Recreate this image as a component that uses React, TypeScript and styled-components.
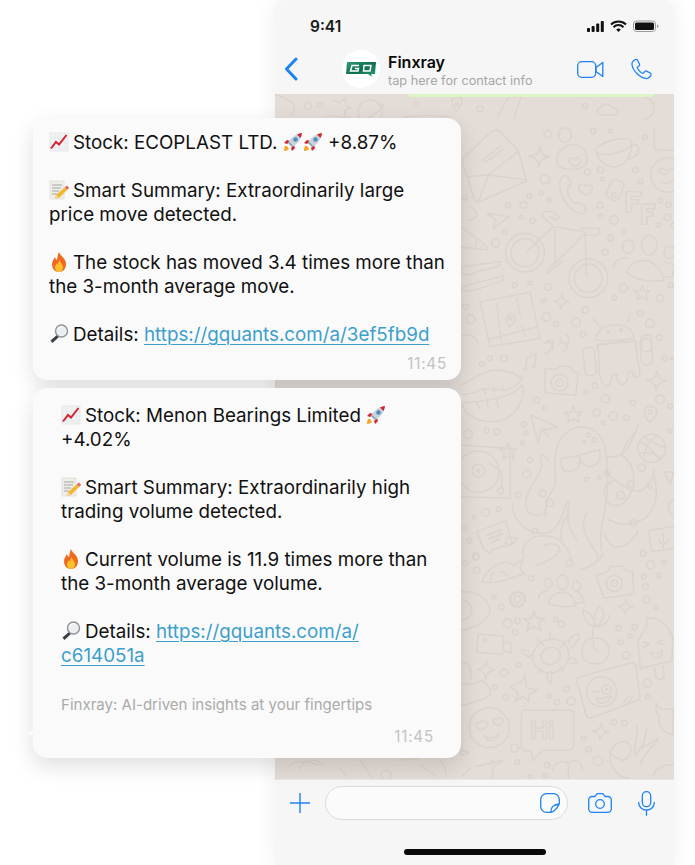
import React from "react";
import styled, { createGlobalStyle } from "styled-components";

const Global = createGlobalStyle`
  html, body { margin: 0; padding: 0; background: #fff; }
  body { font-family: Inter, "Liberation Sans", sans-serif; }
`;

const Page = styled.div`
  position: relative;
  width: 695px;
  height: 865px;
  overflow: hidden;
  background: #fff;
`;
const Phone = styled.div`
  margin-left: 275px;
  width: 399px;
  height: 865px;
  display: flex;
  flex-direction: column;
  background: #f6f6f6;
  border-radius: 10px 10px 0 0;
  box-shadow: 0 0 22px rgba(0, 0, 0, 0.07);
`;
const StatusBar = styled.div`
  height: 44px;
  display: flex;
  align-items: center;
  justify-content: space-between;
  padding: 8px 14px 0 35px;
  box-sizing: border-box;
`;
const Clock = styled.span`
  font-size: 15.5px;
  font-weight: 600;
  color: #1a1a1a;
`;
const ChatHeader = styled.div`
  height: 50px;
  display: flex;
  align-items: center;
  padding: 0 21px 0 9px;
  box-sizing: border-box;
`;
const Avatar = styled.div`
  width: 38px;
  height: 38px;
  border-radius: 50%;
  background: #fff;
  margin-left: 44px;
  display: flex;
  align-items: center;
  justify-content: center;
  flex: none;
`;
const Contact = styled.div`
  margin-left: 8px;
  flex: 1;
  display: flex;
  flex-direction: column;
  margin-top: 3px;
`;
const Name = styled.span`
  font-size: 16px;
  line-height: 20px;
  font-weight: 600;
  color: #0a0a0a;
`;
const Sub = styled.span`
  font-size: 12.7px;
  line-height: 17px;
  color: #a6a6a6;
`;
const HeaderActions = styled.div`
  display: flex;
  align-items: center;
  gap: 26px;
`;
const Wallpaper = styled.div`
  flex: 1;
  position: relative;
  background: #e4dcd6;
  overflow: hidden;
`;
const Doodles = styled.svg`
  display: block;
  width: 399px;
  height: 685px;
`;
const GreenStrip = styled.div`
  position: absolute;
  top: 0;
  left: 133px;
  width: 246px;
  height: 3px;
  background: #dcf5c4;
  border-radius: 0 0 6px 6px;
`;
const Composer = styled.div`
  height: 86px;
  display: flex;
  flex-direction: column;
  background: #f6f6f6;
  border-top: 1px solid #ebe7e3;
  box-sizing: border-box;
`;
const ComposerRow = styled.div`
  display: flex;
  align-items: center;
  height: 46px;
  margin-top: 0;
  padding: 0 18px 0 15px;
`;
const InputField = styled.div`
  margin-left: 15px;
  width: 243px;
  height: 34px;
  box-sizing: border-box;
  background: #fbfbfb;
  border: 1px solid #dcdcdc;
  border-radius: 17px;
  display: flex;
  align-items: center;
  justify-content: flex-end;
  padding-right: 7px;
`;
const RightIcons = styled.div`
  margin-left: 20px;
  display: flex;
  align-items: center;
  gap: 26px;
`;
const HomeBar = styled.div`
  width: 142px;
  height: 6px;
  border-radius: 3px;
  background: #0a0a0a;
  margin: 23px auto 0;
`;
const Stack = styled.div`
  position: absolute;
  left: 33px;
  top: 118px;
  width: 428px;
  display: flex;
  flex-direction: column;
  gap: 8px;
`;
const Bubble = styled.div<{ $inset: number; $top: number; $tail?: boolean }>`
  position: relative;
  box-sizing: border-box;
  background: #fafafa;
  border-radius: 14px;
  box-shadow: 0 8px 22px rgba(0, 0, 0, 0.13);
  padding: ${(p) => p.$top}px 14px 0 ${(p) => p.$inset}px;
  color: #111;
  font-size: 18.8px;
  line-height: 24px;
  ${(p) =>
    p.$tail
      ? `&::before {
    content: "";
    position: absolute;
    left: -7px;
    bottom: 22px;
    border-style: solid;
    border-width: 3px 8px 3px 0;
    border-color: transparent #fafafa transparent transparent;
  }`
      : ""}
`;
const Para = styled.div<{ $right?: number }>`
  margin-bottom: 24px;
  padding-right: ${(p) => p.$right ?? 0}px;
`;
const LastPara = styled.div`
  margin: 0;
`;
const Link = styled.a`
  color: #3c9fcc;
  text-decoration: underline;
  text-underline-offset: 3px;
  text-decoration-thickness: 1px;
`;
const Tagline = styled.div`
  margin-top: 25px;
  font-size: 15.05px;
  line-height: 24px;
  color: #aaaaaa;
`;
const Time = styled.div<{ $top: number; $bottom: number; $right?: number }>`
  text-align: right;
  font-size: 15.2px;
  line-height: 20px;
  letter-spacing: 0.8px;
  color: #c2c2c2;
  margin-top: ${(p) => p.$top}px;
  padding-bottom: ${(p) => p.$bottom}px;
  padding-right: ${(p) => p.$right ?? 0}px;
`;
const EmojiIcon = styled.svg`
  display: inline-block;
  width: 20px;
  height: 20px;
  vertical-align: -3px;
  margin-right: 4px;
`;

const Chart = () => (
  <EmojiIcon viewBox="0 0 20 20">
    <rect x="1" y="1" width="18" height="18" fill="#f2f2f4" stroke="#dcdde0" strokeWidth=".6" />
    <path d="M1 6h18M1 11h18M1 16h18M6 1v18M11 1v18M16 1v18" stroke="#dfe1e5" strokeWidth=".5" />
    <path d="M2 16.5 7 10l3 2.5L17.5 3" fill="none" stroke="#d32433" strokeWidth="2" />
  </EmojiIcon>
);
const Memo = () => (
  <EmojiIcon viewBox="0 0 20 20">
    <rect x="1" y="1" width="14" height="18" fill="#efefe9" stroke="#d8d8d0" strokeWidth=".6" />
    <path d="M3 5h10M3 8h9M3 11h7M3 14h5" stroke="#9b9b9b" strokeWidth=".9" />
    <path d="M18 5.5 20 8 10 18l-4 1 1-4z" fill="#f2b632" />
    <path d="M18 5.5 20 8l-1.6 1.6-2.6-2z" fill="#e0667a" />
    <path d="M7 15l-1 4 4-1z" fill="#f3d9ae" />
  </EmojiIcon>
);
const Rocket = () => (
  <EmojiIcon viewBox="0 0 20 20" style={{ marginRight: 0 }}>
    <path d="M2 14c-1 2-1 4-1 5 2 0 4-1 5-2l-2-3z" fill="#f7a823" />
    <path d="M1 11l3-3 3 1-3 3zM9 19l3-3-1-3-3 3z" fill="#d5222f" />
    <path d="M5 11C8 5 13 2 19 1c-1 6-4 11-10 14z" fill="#c7d2dc" />
    <path d="M14 2.500c2-1 3-1.200 5-1.500-.3 2-.6 3-1.500 5z" fill="#d5222f" />
    <circle cx="12.500" cy="7.500" r="2" fill="#3e8fd0" stroke="#7f96a8" strokeWidth=".7" />
    <path d="M5 11l4 4 1.500-.8L5.800 9.500z" fill="#8fa3b3" />
  </EmojiIcon>
);
const Fire = () => (
  <EmojiIcon viewBox="1.500 0 17 20">
    <path d="M10 0c1 4 7 6 7 12 0 5-3 8-7 8s-7-3-7-8c0-3 2-5 3-7 .3 1.500 1 2.500 2 3C8.500 6 8.500 3 10 0z" fill="#ef6a1f" />
    <path d="M10.500 8c.5 2.500 3.500 4 3.500 7.500 0 2.500-2 4.500-4 4.500s-4-2-4-4.500c0-2 1.300-3 2-4.500.3.800.7 1.300 1.200 1.500 0-1.500 0-3 1.300-4.500z" fill="#fbc02d" />
  </EmojiIcon>
);
const Magnifier = () => (
  <EmojiIcon viewBox="0 0 20 20">
    <path d="M8.500 10.500 1.500 16.500l2 2.500 7-6.500z" fill="#3b3f44" />
    <circle cx="12.500" cy="7" r="6" fill="#eceff2" stroke="#8d949b" strokeWidth="1.400" />
    <path d="M9 5c1-2 3-2.800 5-2.300" fill="none" stroke="#fff" strokeWidth="1.200" />
  </EmojiIcon>
);

const BLUE = "#1c83f5";
const LineIcon = styled.svg`
  display: block;
  flex: none;
  fill: none;
  stroke: ${BLUE};
  stroke-linecap: round;
  stroke-linejoin: round;
`;

const Dots = ({ pts }: { pts: number[][] }) => (
  <>
    {pts.map(([x, y, r], i) => (
      <circle key={i} cx={x} cy={y} r={r} />
    ))}
  </>
);
const Star = ({ x, y, s = 1 }: { x: number; y: number; s?: number }) => (
  <path
    transform={`translate(${x} ${y}) scale(${s})`}
    d="M0-26 7-8 26-9 12 4 18 22 0 12-17 22-12 4-26-8-7-8Z"
  />
);
const Sparkle = ({ x, y, s = 1 }: { x: number; y: number; s?: number }) => (
  <path
    transform={`translate(${x} ${y}) scale(${s})`}
    d="M2-30C4-8 10-3 30 0 8 4 3 10-2 30-5 8-10 4-30-2-8-5-2-10 2-30Z"
  />
);

const Wall = () => (
  <Doodles viewBox="275 94 399 685" fill="none" stroke="#dbd3cc" strokeLinecap="round" strokeLinejoin="round">
    <g strokeWidth="1.5">
      <circle cx="308" cy="106" r="3.500" />
      <circle cx="320" cy="105" r="2.500" />
      <path d="M333 100l6 3 6-5 1 7 5 3-6 2-1 6" />
      <circle cx="370" cy="112" r="12" />
      <path d="M357 118c-6 3-5 5 0 4 8-2 18-7 25-14 3-4 0-5-4-3" />
      <path d="M275 95c8 0 12 6 18 8 3 4 1 10-3 12" />
      <path d="M322 122c4-7 14-8 20-4 6-3 12 2 14 6" />
      <circle cx="416" cy="104" r="2.500" />
      <path d="M452 100c2-4 8-4 10 0 1 4-3 8-5 11-3-3-6-7-5-11Z" />
      <circle cx="457" cy="104" r="1.500" />
      <path d="M403 118c10-3 40-3 48 0" />
      <circle cx="480" cy="109" r="3" />
      <path d="M510 94l-12 22M522 94l-8 24" />
      <circle cx="585" cy="106" r="2.500" />
      <path d="M600 108c2-5 10-5 12 0 5-1 8 4 5 7h-18c-3-3-2-7 1-7Z" />
      <path d="M640 96c8 0 14 5 14 12s-6 10-10 12" />
      <path d="M300 770c0-5 4-9 9-9 5-2 12 0 14 4M340 768l6 8M360 760l12 18M386 770a5 5 0 1 0 .1 0M420 765l18 12M470 768l-8 8" />
      <path d="M290 765c8-5 20-4 28 0M400 760l20-2M440 760c4 4 6 10 6 16" />
    </g>
    <g transform="translate(460 130) scale(.3333)" strokeWidth="4.500">
      <path d="M10 85 90 8c14-10 26-8 35 0l50 55 25 90-140 62c-8 3-14 0-17-8L8 100c-1-6 0-11 2-15Z" />
      <path d="M25 140 85 135 175 65M85 135 200 150M85 135 55 215M65 92l58-45M74 98l56-40" />
      <Sparkle x={238} y={80} />
      <path d="M290 90c0-30 30-50 55-45 25 3 40 25 35 50-5 20-30 25-50 22-20 2-40-5-40-27Z" />
      <path d="M345 110c-15-6-22-15-18-22 5-6 12-4 15 1 3-7 14-8 18-1 3 8-5 17-15 22Z" />
      <ellipse cx="315" cy="15" rx="19" ry="22" />
      <ellipse cx="462" cy="50" rx="55" ry="20" transform="rotate(-14 462 50)" />
      <path d="M408 58c3 30 30 58 62 52 30-6 45-40 46-72M515 45c28-8 32 30-8 42" />
      <circle cx="624" cy="135" r="52" />
      <path d="M600 128c-8-8 4-18 12-8 8-6 16 4 6 14ZM630 125c-2-10 10-14 14-6M605 155c12 8 26 6 36-4" />
      <path d="M582 0v50c0 8 8 10 14 10h44" />
      <path d="M303 145c-14 35 15 95 58 105 14 3 22-10 14-20l-12-10c-8-6-16 2-22-2-12-8-20-30-18-42 2-6 10-8 10-18l-8-16c-6-8-18-5-22 3Z" />
      <path d="M378 195c-16-8-26-20-20-28 6-8 16-4 20 2 6-6 18-6 20 4 2 8-8 16-20 22Z" />
      <rect x="445" y="150" width="40" height="60" rx="12" transform="rotate(25 465 180)" />
      <path d="M498 185h45v14h-28v10h20v13h-20v24h-17ZM545 222h40v14h-24v10h18v13h-18v24h-16Z" />
      <circle cx="462" cy="195" r="7" />
      <circle cx="195" cy="368" r="58" />
      <circle cx="195" cy="368" r="42" />
      <circle cx="385" cy="445" r="58" />
      <circle cx="385" cy="445" r="42" />
      <path d="M200 365 280 290 375 305 380 440M285 300 285 400 375 310M280 290 245 255c8-18 40-15 52 8l-8 8-20-12M362 295h52c8 0 8 20-4 20h-35M260 430l46-36M265 415l20-15" />
      <path d="M80 250 148 260 100 297 108 270Z" />
      <path d="M0 290 78 345 82 360 0 350M50 325 45 358M70 340 60 358" />
      <path d="M30 232c10 0 20 10 20 25-6 8-18 14-26 14" />
      <path d="M5 410 118 395c6 6 0 14-8 16l-60 14c-14 12-30 10-45 6ZM5 470 130 437c6 8-3 16-12 18l-52 18c-14 10-40 8-61 10Z" />
      <path d="M60 515 210 487 240 625 90 650Z" />
      <path d="M80 630 235 590" />
      <path d="M110 520l15 120M170 505l12 60M185 590l10 25" strokeDasharray="12 8" />
      <path d="M150 590c-14-12-18-28-6-36 10-6 24 2 22 14-2 8-10 16-16 22Z" />
      <circle cx="150" cy="565" r="5" />
      <Sparkle x={305} y={515} s={.8} />
      <Star x={547} y={490} s={.9} />
      <ellipse cx="505" cy="350" rx="17" ry="20" />
      <ellipse cx="568" cy="345" rx="23" ry="29" />
      <ellipse cx="628" cy="367" rx="16" ry="19" />
      <path d="M500 428c10-45 90-60 112 22-40 8-80 2-112-22ZM460 415c6-26 22-34 42-30M610 395l35 10-8 35-22 0" />
      <path d="M400 565l22 28M512 550l-10 28M408 630c0-55 110-65 114-5-40 8-80 8-114 5Z" />
      <path d="M410 660v-14l118-14v28" />
      <circle cx="445" cy="605" r="4" />
      <circle cx="482" cy="600" r="4" />
      <rect x="545" y="615" width="30" height="50" rx="12" />
      <path d="M260 640c0-10 14-14 20-4l-2 22M320 615c10 6 8 24-4 32M300 620c6 6 4 18-4 24" />
      <path d="M3 620c20-12 46-2 50 20" />
      <Dots
        pts={[
          [263, 12, 11], [400, 3, 8], [452, 4, 6], [555, 22, 7], [382, 126, 9], [422, 120, 9], [526, 120, 8], [428, 148, 6],
          [541, 154, 7], [255, 148, 14], [208, 198, 7], [243, 190, 6], [267, 211, 6], [14, 202, 7], [144, 226, 8], [190, 225, 10],
          [420, 226, 9], [421, 258, 7], [462, 270, 13], [602, 211, 7], [625, 224, 8], [622, 262, 10], [595, 285, 7], [639, 285, 6],
          [184, 262, 6], [218, 273, 8], [134, 306, 7], [107, 340, 12], [452, 324, 9], [492, 306, 5], [436, 367, 9], [164, 466, 7],
          [210, 460, 6], [263, 471, 10], [250, 512, 6], [376, 540, 10], [490, 474, 12], [463, 504, 7], [600, 505, 11], [632, 466, 7],
          [16, 530, 8], [32, 568, 13], [259, 561, 13], [288, 582, 8], [348, 576, 13], [369, 612, 8], [541, 550, 9], [570, 580, 13], [598, 623, 9],
        ]}
      />
    </g>
    <g transform="translate(460 340) scale(.3333)" strokeWidth="4.500">
      <path d="M3 135c35-15 65-45 108-45 30 2 55 8 75 25-8 14-20 26-42 32-30 6-60-6-85 4-18 7-35 12-53 12" />
      <path d="M5 190c50-6 140-8 183-55 10 55-35 110-90 110-45 0-85-20-93-55Z" />
      <path d="M70 145l8 18M100 140l3 15M125 135l8 18M50 185l8 20M80 180l5 22M110 178l5 22" />
      <path d="M198 85l3-30 28-14-4 34M198 85c-10-4-10 8 0 6M225 75c-10-4-10 8 0 6" />
      <path d="M255 85 290 88l8-10 35 2 8 15 14 3-8 68-92-8Z" />
      <circle cx="299" cy="128" r="25" />
      <circle cx="299" cy="128" r="11" />
      <path d="M415 12 525 2l15 100c0 12-18 12-22 0l-2-10-10 3c0 50-38 50-35 8l-15 2c0 44-33 44-34 2l-4-2Z" />
      <rect x="372" y="22" width="34" height="85" rx="14" transform="rotate(-6 389 65)" />
      <rect x="542" y="-5" width="34" height="80" rx="14" transform="rotate(-6 559 35)" />
      <path d="M255 10c10-10 25-4 20 14-4 10-12 16-20 16M305 8c10 0 20 4 15 18-2 4-6 6-10 6" />
      <Sparkle x={590} y={122} />
      <path d="M570 248c-14-14-22-30-14-42 10-12 32-8 34 8 0 12-10 24-20 34Z" />
      <circle cx="570" cy="216" r="6" />
      <Star x={340} y={225} />
      <path d="M212 225 295 262 243 270 235 310Z" />
      <path d="M245 268 265 290" />
      <path d="M285 378c-5-70 30-118 85-118 60 5 72 65 72 135 2 38 2 90-15 150-5 25-5 50-3 85" />
      <path d="M285 378c2 40 5 60-15 85-14 20-14 50-15 68M265 360c-25-30-26-18-20 15 2 30-45 65-48 115 0 30 25 45 50 30" />
      <path d="M157 490c0 50 40 90 90 90 30 0 50-20 66-70 8-28 15-40 12-10-6 40 0 70 25 100M440 350c30 2 60 8 95-95-5 30-42 50-52 90 30 15 42 50 38 90-8 30-25 62-58 62-14 0-30-15-30-40 0-22 18-40 38-32" />
      <path d="M435 395c40 35 100 90 130 35 10-10 18-30 15-40 12 60 18 100-20 140-35 26-75 30-115 8" />
      <path d="M190 650c-10-50 35-70 85-60 30 10 50 30 60 70M330 520c-25 20-30 50-25 85M380 520c-15 25-10 55 5 80 15 20 30 50 30 60M435 575c0 25 20 50 45 45 18 0 48-30 55-50" />
      <path d="M250 620c20-15 50-10 50 15" />
      <path d="M304 355l54-8c5 20 2 38-18 46l-24 3c-14-12-14-28-12-41ZM358 345l60-16c5 20 3 36-10 46l-22 6c-16-5-26-18-28-36ZM350 370l10-5" />
      <path d="M370 420c4-8 14-10 18-6-2 10-10 14-18 6Z" />
      <circle cx="385" cy="285" r="6" />
      <circle cx="402" cy="300" r="7" />
      <circle cx="372" cy="305" r="4" />
      <circle cx="440" cy="400" r="8" />
      <circle cx="420" cy="412" r="5" />
      <circle cx="450" cy="430" r="3" />
      <circle cx="175" cy="465" r="8" />
      <circle cx="248" cy="460" r="10" />
      <circle cx="268" cy="488" r="12" />
      <circle cx="225" cy="572" r="8" />
      <circle cx="512" cy="432" r="10" />
      <circle cx="482" cy="466" r="12" />
      <circle cx="520" cy="548" r="9" />
      <circle cx="570" cy="440" r="5" />
      <circle cx="575" cy="325" r="42" />
      <path d="M540 305c25 10 50 40 58 55M590 290c-30 15-40 45-35 72M555 290c20 20 50 30 60 30M537 340c25-5 50 0 70 15" />
      <path d="M0 315 150 325 150 475 0 470" />
      <circle cx="55" cy="395" r="62" />
      <circle cx="55" cy="392" r="19" />
      <circle cx="55" cy="392" r="4" />
      <path d="M90 370 125 395 125 445" />
      <circle cx="122" cy="452" r="9" />
      <Star x={145} y={335} />
      <path d="M50 575 138 542 155 612 98 628 92 642 72 630Z" />
      <path d="M82 585l40-15M86 597l40-15M92 608l25-10" strokeWidth="6" />
      <path d="M135 610l8-18 30 2-18 22Z" />
      <rect x="570" y="565" width="85" height="65" rx="10" transform="rotate(-8 610 600)" />
      <path d="M610 580v25M598 598c2 18 22 18 26 0M610 612v12" />
      <path d="M610 395l30 2-8 35ZM640 480a15 22 0 1 0 .1 0" />
      <Dots
        pts={[
          [132, 55, 10], [90, 55, 7], [65, 72, 7], [405, 138, 8], [377, 156, 6], [614, 55, 7], [436, 176, 12], [518, 188, 8], [600, 178, 13],
          [630, 198, 7], [229, 180, 9], [254, 203, 6], [410, 218, 11], [460, 228, 13], [430, 248, 6], [499, 234, 8], [192, 253, 8], [198, 280, 6],
          [188, 309, 5], [80, 272, 7], [110, 275, 9], [24, 283, 13], [630, 272, 6], [210, 360, 8], [200, 402, 12], [545, 382, 11],
          [76, 518, 12], [116, 508, 7], [42, 530, 6], [14, 564, 7], [28, 602, 7], [47, 650, 11], [550, 640, 9], [635, 55, 4],
        ]}
      />
    </g>
    <g transform="translate(460 555) scale(.3333)" strokeWidth="4.500">
      <path d="M65 80C88 32 130 8 162 32L190 10 180 42 192 56C150 70 100 92 65 80Z" />
      <path d="M100 50l-12 30M120 50c10 0 20 6 22 12" />
      <path d="M230 30c30-10 60-25 65-40M360 45c35-10 60-30 70-50" />
      <circle cx="172" cy="133" r="22" strokeWidth="8" strokeDasharray="8 6" />
      <circle cx="172" cy="133" r="10" />
      <ellipse cx="265" cy="85" rx="12" ry="14" />
      <ellipse cx="308" cy="82" rx="17" ry="22" />
      <ellipse cx="350" cy="93" rx="12" ry="14" />
      <path d="M265 145c5-40 75-50 82 7-30 6-60 2-82-7ZM235 130c2-15 15-25 30-22M345 108c15 0 25 20 28 35l-25 0" />
      <path d="M408 62 445 48l8-14 38 0 8 14 18 0 5 68-90 14Z" />
      <circle cx="463" cy="85" r="24" />
      <circle cx="463" cy="85" r="10" />
      <Sparkle x={497} y={155} s={.8} />
      <Star x={222} y={200} s={1.2} />
      <path d="M400 250c-4-20-4-30 3-45M370 165c20 5 40 35 35 50-25-4-38-30-35-50ZM420 155c20 20 8 45-12 60-10-20-5-50 12-60ZM448 180c0 20-20 35-40 35" />
      <path d="M400 250c-30 0-42 35-30 60 16 22 55 22 70 0 16-26 5-55-22-60-8 0-14 0-18 0ZM402 260c-6 16-2 25 12 28" />
      <path d="M560 190c30-6 65 15 78 60l-2 68-95 22-8-85c12-5 12-22 20-30 6 0 10-20 7-35Z" />
      <path d="M585 338l3 30c8 10 25 6 24-6l-3-30M550 262l20 6-20 8M610 255l-20 8 22 6M572 290c10 6 28 6 35-4 0 30-30 30-35 4Z" />
      <ellipse cx="272" cy="303" rx="55" ry="50" transform="rotate(-25 272 303)" />
      <ellipse cx="272" cy="303" rx="30" ry="25" transform="rotate(-25 272 303)" />
      <path d="M250 270l-18-18M300 280l18-22M300 330l12 22M245 340l-12 14M222 300h-12" />
      <path d="M325 265c5-20 25-35 32-25 5 15-15 30-25 40M330 310c14-2 22 8 22 14l-22 2M208 290c-12-5-22-5-25-2 5 10 20 18 28 18M260 350c4 16 2 32 8 36 8-2 8-24 6-38M270 230v25" />
      <rect x="52" y="240" width="78" height="55" rx="8" transform="rotate(5 90 268)" />
      <path d="M128 268l24-8 2 34-26-8" />
      <circle cx="75" cy="255" r="5" />
      <Sparkle x={78} y={345} s={.9} />
      <path d="M348 368 510 325c12-3 16 3 18 10l12 90c0 6-4 10-8 12L390 490c-8 0-10-6-12-10Z" />
      <circle cx="425" cy="410" r="45" />
      <circle cx="440" cy="403" r="14" />
      <circle cx="440" cy="403" r="3" />
      <path d="M398 408c6 2 12 4 18 2M408 430c14 2 35-2 46-10-4 25-40 35-46 10Z" />
      <path d="M490 445l14-20M505 445l12-20" />
      <path d="M186 380 195 360 200 398 232 405 205 420 208 440 188 425 165 440 175 415 150 395Z" />
      <path d="M0 388c40 0 45 0 65-12 20 12 30 30 25 45-25 15-65 28-90 30" />
      <path d="M5 320c25 0 35 35 25 55" />
      <path d="M5 110c40-5 80 20 85 55 0 30-50 60-90 60" />
      <circle cx="5" cy="165" r="30" strokeDasharray="5 4" />
      <circle cx="88" cy="518" r="60" />
      <path d="M60 525c-18-10-10-26 0-22 6-8 24-6 22 8-2 6-12 12-22 14ZM108 510c-12-8-10-22 2-18 6-8 22-2 18 10-2 4-10 8-20 8ZM72 540c10 14 36 12 45-6 0 30-40 30-45 6Z" />
      <path d="M200 465h125c10 0 16 6 16 14v90c0 12-8 16-16 16h-75l-30 32-8-30h-12c-10 0-16-6-16-16V480c0-10 8-15 16-15Z" />
      <text x="210" y="552" fontFamily="Inter, sans-serif" fontSize="72" fontWeight="700" strokeWidth="3.500">Hi</text>
      <path d="M590 445c-5 20 35 20 50 15v80c-30-5-50-30-42-55-8-8-14-25-8-40Z" />
      <Sparkle x={422} y={530} s={.85} />
      <path d="M450 590c-5 40 20 80 60 80M530 510c8 30-12 70-5 90l25-30 10-50c-2 25-8 40-15 60l50-30c-20 30-50 55-55 80M450 590c20-30 45-40 60-20 8 16-5 50-25 45-16-3-30-15-35-25" />
      <path d="M45 635 130 615l-30 20-5 35M100 625l-6-12" />
      <path d="M280 650c-5-20 25-40 45-25 18-15 45-5 40 20M325 625v45" />
      <path d="M580 660c5-15 30-35 60-30" />
      <path d="M5 570l-2 30M0 585l28 8-22 8" />
      <Dots
        pts={[
          [15, 25, 7], [50, 46, 10], [48, 6, 8], [213, 70, 8], [328, 24, 10], [572, 30, 12], [552, 65, 7], [598, 62, 7], [557, 95, 9],
          [612, 22, 7], [560, 134, 11], [588, 158, 5], [102, 125, 6], [125, 156, 8], [143, 205, 13], [173, 198, 8], [166, 232, 8], [288, 193, 7],
          [304, 208, 9], [476, 220, 8], [524, 216, 8], [482, 262, 7], [510, 244, 6], [498, 301, 11], [175, 330, 7], [132, 353, 11],
          [105, 396, 7], [138, 427, 8], [267, 423, 7], [291, 441, 8], [333, 439, 12], [320, 402, 8], [562, 385, 12], [564, 425, 7],
          [462, 502, 8], [493, 504, 8], [371, 550, 7], [386, 583, 8], [164, 580, 12], [172, 622, 7], [261, 630, 8], [414, 618, 14], [211, 665, 6], [256, 662, 6],
        ]}
      />
    </g>
  </Doodles>
);

const App = () => (
  <Page>
    <Global />
    <Phone>
      <StatusBar>
        <Clock>9:41</Clock>
        <svg width="73" height="12" viewBox="0 0 73 12">
          <rect x="0" y="8" width="3" height="4" rx=".8" fill="#111" />
          <rect x="4.600" y="6" width="3" height="6" rx=".8" fill="#111" />
          <rect x="9.200" y="3.500" width="3" height="8.500" rx=".8" fill="#111" />
          <rect x="13.800" y="1" width="3" height="11" rx=".8" fill="#111" />
          <path d="M24 4.500a11 11 0 0 1 15 0M26.500 7.200a7 7 0 0 1 10 0" fill="none" stroke="#111" strokeWidth="2" />
          <path d="M29.200 9.500a3.400 3.400 0 0 1 4.600 0L31.500 12z" fill="#111" />
          <rect x="46.500" y="1" width="22" height="10.500" rx="3" fill="none" stroke="#999" />
          <rect x="48" y="2.500" width="19" height="7.500" rx="1.600" fill="#111" />
          <path d="M70 4.500c1 .3 1.500 1 1.500 1.800S71 7.800 70 8z" fill="#999" />
        </svg>
      </StatusBar>
      <ChatHeader>
        <LineIcon width="14" height="24" viewBox="0 0 14 24" strokeWidth="3">
          <path d="M12 2 2.500 12 12 22" />
        </LineIcon>
        <Avatar>
          <svg width="32" height="17" viewBox="0 0 32 17">
            <defs>
              <linearGradient id="lg" x1="0" y1="0" x2="1" y2="1">
                <stop offset="0" stopColor="#2f9c78" />
                <stop offset=".5" stopColor="#0e6d50" />
                <stop offset="1" stopColor="#2aa37e" />
              </linearGradient>
            </defs>
            <path d="M2 1h29l-1 12h-4l1 3-4-3H1z" fill="url(#lg)" />
            <path d="M14 4.500H7L5.500 10H13l.5-2.500H10M19 4.500h7L25 10h-6.500z" fill="none" stroke="#fff" strokeWidth="1.500" />
          </svg>
        </Avatar>
        <Contact>
          <Name>Finxray</Name>
          <Sub>tap here for contact info</Sub>
        </Contact>
        <HeaderActions>
          <LineIcon width="27" height="17" viewBox="0 0 27 17" strokeWidth="1.300">
            <rect x=".7" y=".7" width="18" height="15.600" rx="4" />
            <path d="M19 6.500 25.800 1.500v14L19 10.500z" />
          </LineIcon>
          <LineIcon width="23" height="24" viewBox="0 0 24 24" strokeWidth="1.300">
            <path d="M22 17.500c0 1.500-2.200 4.500-4.800 4.500C10.500 21.500 2.500 13.500 2 6.800 2 4.200 5 2 6.500 2c.6 0 1.100.3 1.400.9l2 4c.3.600.1 1.300-.4 1.700L8 9.900c-.4.300-.5.800-.3 1.300 1.300 2.300 3 4 5.200 5.200.5.200 1 .1 1.300-.3l1.300-1.500c.4-.5 1.100-.7 1.700-.4l4 2c.5.300.8.800.8 1.300z" />
          </LineIcon>
        </HeaderActions>
      </ChatHeader>
      <Wallpaper>
        <Wall />
        <GreenStrip />
      </Wallpaper>
      <Composer>
        <ComposerRow>
          <LineIcon width="20" height="20" viewBox="0 0 20 20" strokeWidth="1.400">
            <path d="M10 0v20M0 10h20" />
          </LineIcon>
          <InputField>
            <LineIcon width="20" height="20" viewBox="0 0 20 20" strokeWidth="1.300">
              <path d="M19.300 11V6.500A5.800 5.800 0 0 0 13.500.7h-7A5.800 5.800 0 0 0 .7 6.500v7a5.800 5.800 0 0 0 5.800 5.800H11c1 0 5.500-2 8.300-8.300zM11 19.300c-.5-5 2.500-8 8.300-8.300" />
            </LineIcon>
          </InputField>
          <RightIcons>
            <LineIcon width="24" height="20" viewBox="0 0 24 20" strokeWidth="1.300">
              <path d="M7 3.500 8.500 1.300c.3-.4.700-.6 1.200-.6h4.600c.5 0 .9.200 1.200.6L17 3.500h3c1.800 0 3.300 1.500 3.300 3.300v9c0 1.900-1.500 3.500-3.300 3.500H4C2.200 19.300.7 17.700.7 15.800v-9C.7 5 2.200 3.500 4 3.500z" />
              <circle cx="12" cy="11" r="4.300" />
            </LineIcon>
            <LineIcon width="17" height="25" viewBox="0 0 17 25" strokeWidth="1.300">
              <rect x="4.300" y=".7" width="8.400" height="15" rx="4.200" />
              <path d="M.7 11.500c0 4.500 3.500 7.500 7.800 7.500s7.800-3 7.800-7.500M8.500 19v5.300" />
            </LineIcon>
          </RightIcons>
        </ComposerRow>
        <HomeBar />
      </Composer>
    </Phone>
    <Stack>
      <Bubble $inset={16} $top={13}>
        <Para><Chart />Stock: ECOPLAST LTD. <Rocket /><Rocket /> +8.87%</Para>
        <Para><Memo />Smart Summary: Extraordinarily large price move detected.</Para>
        <Para><Fire />The stock has moved 3.4 times more than the 3-month average move.</Para>
        <LastPara><Magnifier />Details: <Link>https://gquants.com/a/3ef5fb9d</Link></LastPara>
        <Time $top={7} $bottom={6}>11:45</Time>
      </Bubble>
      <Bubble $inset={28} $top={16} $tail>
        <Para $right={40}><Chart />Stock: Menon Bearings Limited <Rocket /> +4.02%</Para>
        <Para><Memo />Smart Summary: Extraordinarily high trading volume detected.</Para>
        <Para><Fire />Current volume is 11.9 times more than the 3-month average volume.</Para>
        <LastPara><Magnifier />Details: <Link>https://gquants.com/a/</Link><br /><Link>c614051a</Link></LastPara>
        <Tagline>Finxray: AI-driven insights at your fingertips</Tagline>
        <Time $top={10} $bottom={11} $right={13}>11:45</Time>
      </Bubble>
    </Stack>
  </Page>
);

export default App;
